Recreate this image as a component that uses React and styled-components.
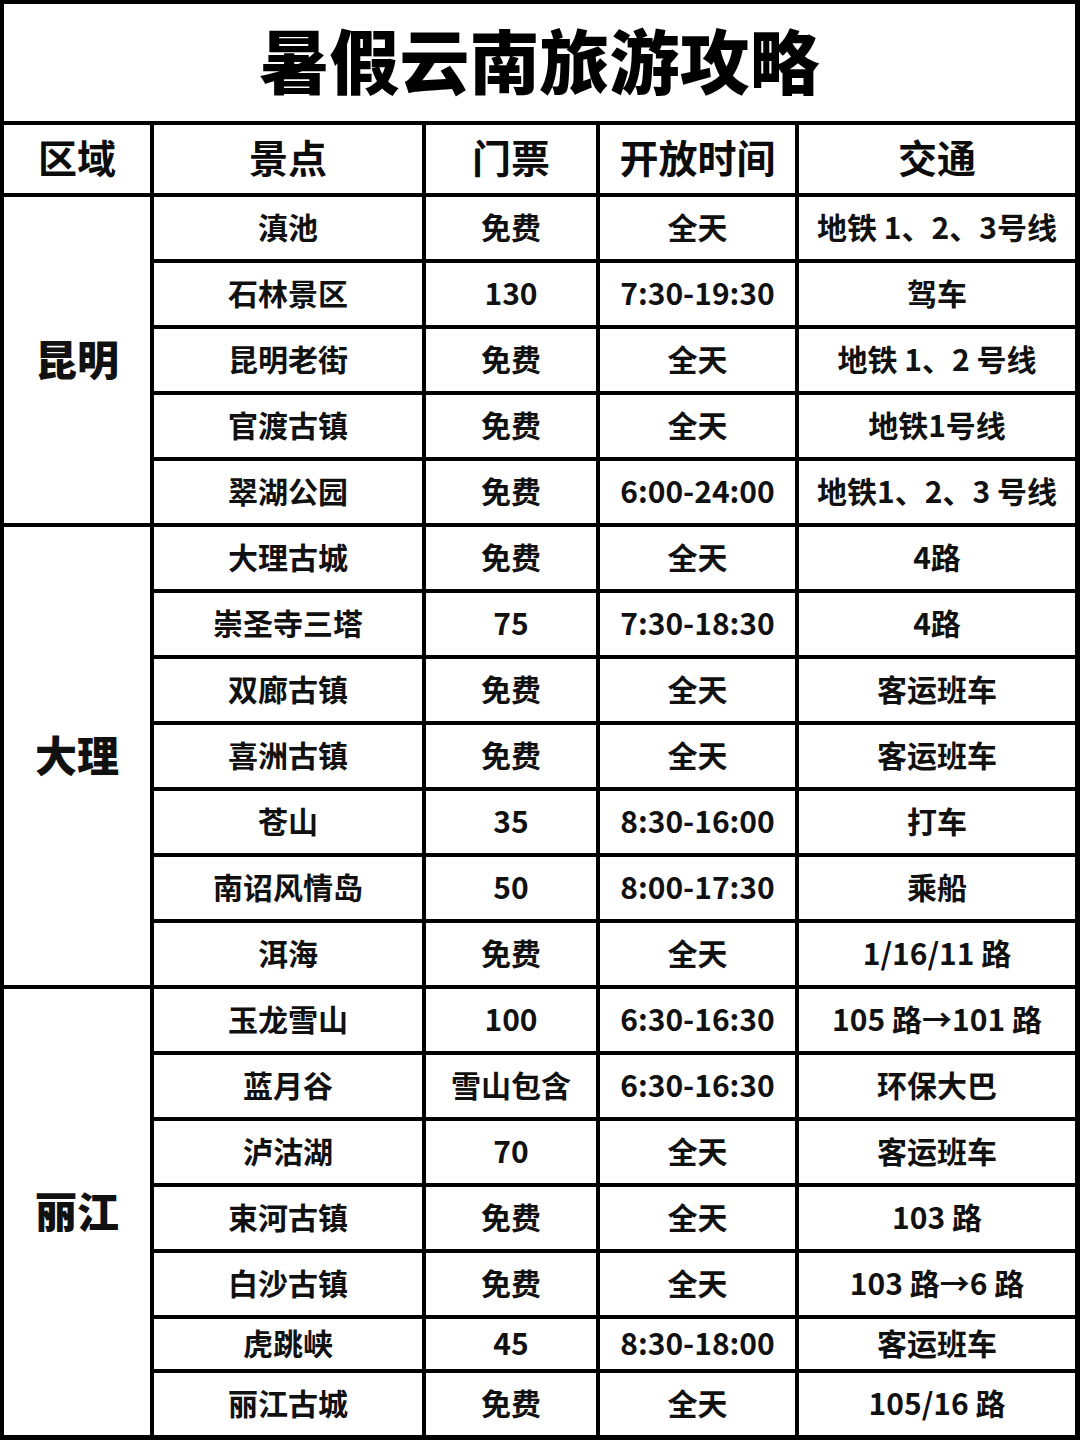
import React from 'react';
import styled, { createGlobalStyle } from 'styled-components';

const GlobalStyle = createGlobalStyle`
  html, body {
    margin: 0;
    padding: 0;
    background: #fff;
  }
  body {
    font-family: "Noto Sans CJK SC", "Noto Sans", sans-serif;
    color: #111;
  }
`;

const regions = [
  {
    name: '昆明',
    rows: [
      ['滇池', '免费', '全天', '地铁 1、2、3号线'],
      ['石林景区', '130', '7:30-19:30', '驾车'],
      ['昆明老街', '免费', '全天', '地铁 1、2 号线'],
      ['官渡古镇', '免费', '全天', '地铁1号线'],
      ['翠湖公园', '免费', '6:00-24:00', '地铁1、2、3 号线'],
    ],
  },
  {
    name: '大理',
    rows: [
      ['大理古城', '免费', '全天', '4路'],
      ['崇圣寺三塔', '75', '7:30-18:30', '4路'],
      ['双廊古镇', '免费', '全天', '客运班车'],
      ['喜洲古镇', '免费', '全天', '客运班车'],
      ['苍山', '35', '8:30-16:00', '打车'],
      ['南诏风情岛', '50', '8:00-17:30', '乘船'],
      ['洱海', '免费', '全天', '1/16/11 路'],
    ],
  },
  {
    name: '丽江',
    rows: [
      ['玉龙雪山', '100', '6:30-16:30', '105 路→101 路'],
      ['蓝月谷', '雪山包含', '6:30-16:30', '环保大巴'],
      ['泸沽湖', '70', '全天', '客运班车'],
      ['束河古镇', '免费', '全天', '103 路'],
      ['白沙古镇', '免费', '全天', '103 路→6 路'],
      ['虎跳峡', '45', '8:30-18:00', '客运班车', true],
      ['丽江古城', '免费', '全天', '105/16 路'],
    ],
  },
];

const headers = ['区域', '景点', '门票', '开放时间', '交通'];

const Sheet = styled.div`
  display: grid;
  grid-template-columns: 146px 268px 170px 195px 276px;
  grid-template-rows: ${({ $rows }) => $rows};
  gap: 4px;
  padding: 4px 5px 5px 4px;
  width: 1080px;
  box-sizing: border-box;
  background: #000;
`;

const Title = styled.div`
  grid-column: 1 / -1;
  display: flex;
  align-items: center;
  justify-content: center;
  background: #fff;
  font-size: 70px;
  font-weight: 900;
  color: #000;
  padding-bottom: 8px;
`;

const Cell = styled.div`
  display: flex;
  align-items: center;
  justify-content: center;
  background: #fff;
  font-size: 30px;
  font-weight: 700;
  white-space: nowrap;
  line-height: 1;
  padding-bottom: 5px;
`;

const HeaderCell = styled(Cell)`
  font-size: 39px;
  color: #0c0c0c;
`;

const RegionCell = styled(Cell)`
  grid-column: 1;
  grid-row: span ${({ $span }) => $span};
  font-size: 42px;
  font-weight: 900;
`;

const App = () => {
  const rowHeights = ['117px', '68px'];
  regions.forEach((r) => r.rows.forEach((row) => rowHeights.push(row[4] ? '50px' : '62px')));

  return (
    <>
      <GlobalStyle />
      <Sheet $rows={rowHeights.join(' ')}>
        <Title>暑假云南旅游攻略</Title>
        {headers.map((h) => (
          <HeaderCell key={h}>{h}</HeaderCell>
        ))}
        {regions.map((region) => (
          <React.Fragment key={region.name}>
            <RegionCell $span={region.rows.length}>{region.name}</RegionCell>
            {region.rows.map((row, i) => (
              <React.Fragment key={region.name + i}>
                <Cell>{row[0]}</Cell>
                <Cell>{row[1]}</Cell>
                <Cell>{row[2]}</Cell>
                <Cell>{row[3]}</Cell>
              </React.Fragment>
            ))}
          </React.Fragment>
        ))}
      </Sheet>
    </>
  );
};

export default App;
